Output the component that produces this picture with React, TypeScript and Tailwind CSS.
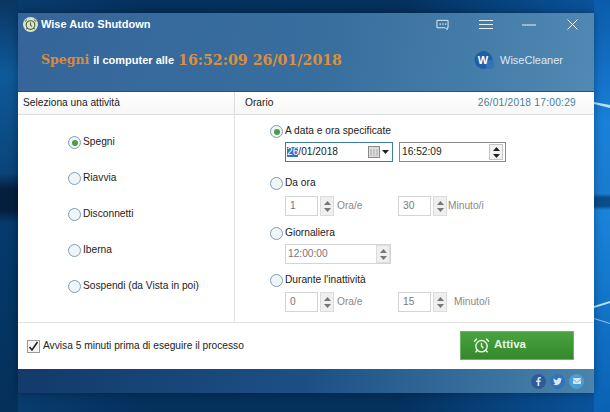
import { AlarmClock } from "lucide-react";
import { FaFacebookF, FaTwitter, FaEnvelope } from "react-icons/fa";

const Radio = ({ checked = false }: { checked?: boolean }) => (
  <span className="flex h-[13px] w-[13px] shrink-0 items-center justify-center rounded-full border border-[#7f9db3] bg-[#eef4f8]">
    {checked && <span className="h-[6px] w-[6px] rounded-full bg-[#4f9a45]" />}
  </span>
);

const Arrow = ({ up }: { up?: boolean }) => (
  <svg width="7" height="4" viewBox="0 0 7 4" className={up ? "" : "rotate-180"}>
    <path d="M3.5 0 7 4H0z" fill="currentColor" />
  </svg>
);

const Stepper = ({ active = false }: { active?: boolean }) => (
  <span
    className={`flex h-full w-[14px] shrink-0 flex-col items-center justify-center gap-[3px] border ${
      active ? "border-[#c4c4c4] bg-[#f2f2f2] text-[#222]" : "border-[#dcdcdc] bg-[#efefef] text-[#777]"
    }`}
  >
    <Arrow up />
    <Arrow />
  </span>
);

const Spin = ({ value }: { value: string }) => (
  <div className="flex h-[20px] items-center gap-[2px]">
    <span className="flex h-full w-[33px] items-center border border-[#d4d4d4] pl-[4px] text-[#777]">{value}</span>
    <Stepper />
  </div>
);

const activities = ["Spegni", "Riavvia", "Disconnetti", "Iberna", "Sospendi (da Vista in poi)"];

export default function App() {
  return (
    <div className="relative h-[412px] w-[610px] overflow-hidden bg-[linear-gradient(90deg,#0a3d70_0%,#04305c_25%,#04305c_65%,#0a56a0_100%)] pl-[18px] pt-[13px] font-['Liberation_Sans',sans-serif] text-[10.2px] leading-none text-[#222]">
      {/* wallpaper */}
      <svg className="absolute left-0 top-0" width="610" height="412" viewBox="0 0 610 412">
        <defs>
          <linearGradient id="wallLeft" x1="0" y1="0" x2="0" y2="1">
            <stop offset="0" stopColor="#0a3560" />
            <stop offset="0.18" stopColor="#0e5a9a" />
            <stop offset="0.42" stopColor="#0a4478" />
            <stop offset="0.46" stopColor="#041f3d" />
            <stop offset="0.51" stopColor="#041f3d" />
            <stop offset="0.54" stopColor="#053a6c" />
            <stop offset="1" stopColor="#04305a" />
          </linearGradient>
          <linearGradient id="wallRight" x1="0" y1="0" x2="0" y2="1">
            <stop offset="0" stopColor="#0a5cab" />
            <stop offset="0.3" stopColor="#1a80d8" />
            <stop offset="0.47" stopColor="#1a7cd0" />
            <stop offset="0.48" stopColor="#0a4d8a" />
            <stop offset="0.5" stopColor="#0a4d8a" />
            <stop offset="0.51" stopColor="#1a84da" />
            <stop offset="1" stopColor="#0a62b4" />
          </linearGradient>
        </defs>
        <rect x="0" y="0" width="18" height="412" fill="url(#wallLeft)" />
        <rect x="594" y="0" width="16" height="412" fill="url(#wallRight)" />
        <path d="M594 102 610 105V108L594 104z" fill="#b8e2fa" />
        <path d="M594 306 610 301V303L594 308z" fill="#b8e2fa" />
        <path d="M594 318 610 323V324L594 319z" fill="#8ccaf2" />
      </svg>

      <div className="relative flex h-[380px] w-[576px] flex-col shadow-[0_0_8px_rgba(0,0,0,0.35)]">
        {/* header */}
        <div className="flex h-[78px] shrink-0 flex-col bg-[linear-gradient(100deg,#35659a_0%,#386f9f_55%,#5089b2_100%)] text-white">
          <div className="flex h-[23px] items-center pl-[5px] pr-[16px]">
            <AlarmClock size={15} className="mr-[3px] rounded-full bg-[#d9e6c8] p-[1px] text-[#4c5f3a]" />
            <span className="text-[11px] font-bold">Wise Auto Shutdown</span>
            <div className="ml-auto flex items-center">
              <svg width="13" height="12" viewBox="0 0 14 12" className="mr-[30px]">
                <path d="M1 1h12v8h-1v2l-2-2H1z" fill="none" stroke="#e8f0f6" strokeWidth="1" />
                <path d="M4 5h1M7 5h1M10 5h1" stroke="#e8f0f6" strokeWidth="2" />
              </svg>
              <svg width="14" height="10" viewBox="0 0 14 10" className="mr-[29px]">
                <path d="M0 .5h14M0 4.5h14M0 8.5h14" stroke="#e8f0f6" />
              </svg>
              <svg width="14" height="2" viewBox="0 0 14 2" className="mr-[31px]">
                <path d="M0 1h14" stroke="#e8f0f6" />
              </svg>
              <svg width="11" height="11" viewBox="0 0 11 11">
                <path d="M.5.5l10 10M10.5.5l-10 10" stroke="#e8f0f6" />
              </svg>
            </div>
          </div>
          <div className="mt-[14px] flex items-center pl-[23px] pr-[31px]">
            <span className="font-['DejaVu_Serif',serif] text-[12.5px] font-bold text-[#d98b3a]">Spegni</span>
            <span className="ml-[4px] text-[11px] font-bold">il computer alle</span>
            <span className="ml-[4px] font-['DejaVu_Serif',serif] text-[14.2px] font-bold text-[#dd8f3c]">
              16:52:09 26/01/2018
            </span>
            <div className="ml-auto flex items-center">
              <span className="relative mr-[5px] flex h-[20px] w-[21px] items-center justify-center">
                <svg width="21" height="20" viewBox="0 0 21 20" className="absolute left-0 top-0">
                  <circle cx="9.5" cy="10" r="9" fill="#1f5fa8" />
                  <circle cx="16" cy="14.5" r="4.5" fill="#2f74b8" />
                </svg>
                <span className="relative pr-[3px] text-[11px] font-bold">W</span>
              </span>
              <span className="text-[11px] text-[#dfe9f0]">WiseCleaner</span>
            </div>
          </div>
        </div>

        {/* body */}
        <div className="flex min-h-0 flex-1 flex-col border-t border-[#2a5272] bg-white">
          <div className="flex h-[23px] shrink-0 border-b border-[#dcdcdc] bg-[linear-gradient(#ffffff,#f7f7f7)]">
            <div className="flex w-[217px] items-center border-r border-[#dcdcdc] pl-[5px]">Seleziona una attività</div>
            <div className="flex flex-1 items-center justify-between pl-[10px] pr-[18px]">
              <span>Orario</span>
              <span className="tracking-[0.25px] text-[#3f8299]">26/01/2018 17:00:29</span>
            </div>
          </div>

          <div className="flex h-[208px] shrink-0 border-b border-[#e2e2e2]">
            <div className="flex w-[217px] flex-col gap-[23px] border-r border-[#e2e2e2] pl-[50px] pt-[21px]">
              {activities.map((a, i) => (
                <label key={a} className="flex h-[13px] items-center gap-[2px]">
                  <Radio checked={i === 0} />
                  {a}
                </label>
              ))}
            </div>

            <div className="flex flex-1 flex-col pl-[35px] pt-[10px]">
              <label className="flex h-[13px] items-center gap-[2px]">
                <Radio checked />
                A data e ora specificate
              </label>
              <div className="ml-[15px] mt-[4px] flex h-[20px] gap-[6px]">
                <div className="flex w-[108px] items-center border border-[#3f7d9c] pl-[1px] pr-[3px]">
                  <span className="bg-[#2f74c0] text-white">26</span>/01/2018
                  <svg width="12" height="12" viewBox="0 0 12 12" className="ml-auto mr-[2px]">
                    <rect x=".5" y=".5" width="11" height="11" fill="#ddd" stroke="#888" />
                    <path d="M3 3v7M6 3v7M9 3v7" stroke="#aaa" />
                  </svg>
                  <Arrow />
                </div>
                <div className="flex w-[107px] items-center justify-between border border-[#888] pl-[2px] pr-[2px]">
                  16:52:09
                  <span className="h-[16px]">
                    <Stepper active />
                  </span>
                </div>
              </div>

              <label className="mt-[15px] flex h-[13px] items-center gap-[2px]">
                <Radio />
                Da ora
              </label>
              <div className="ml-[15px] mt-[6px] flex items-center text-[#888]">
                <Spin value="1" />
                <span className="ml-[3px] w-[61px]">Ora/e</span>
                <Spin value="30" />
                <span className="ml-[1px]">Minuto/i</span>
              </div>

              <label className="mt-[11px] flex h-[13px] items-center gap-[2px]">
                <Radio />
                Giornaliera
              </label>
              <div className="ml-[15px] mt-[4px] flex h-[20px] w-[106px] items-center justify-between border border-[#d4d4d4] pl-[2px] text-[#777]">
                12:00:00
                <Stepper />
              </div>

              <label className="mt-[10px] flex h-[13px] items-center gap-[2px]">
                <Radio />
                Durante l'inattività
              </label>
              <div className="ml-[15px] mt-[5px] flex items-center text-[#888]">
                <Spin value="0" />
                <span className="ml-[3px] w-[61px]">Ora/e</span>
                <Spin value="15" />
                <span className="ml-[7px]">Minuto/i</span>
              </div>
            </div>
          </div>

          <div className="flex flex-1 items-center justify-between pl-[9px] pr-[20px]">
            <label className="flex items-center gap-[3px]">
              <span className="flex h-[13px] w-[13px] items-center justify-center border border-[#999] bg-[#f4f4f4]">
                <svg width="11" height="11" viewBox="0 0 11 11">
                  <path d="M1.5 6 4 9l5.5-8" fill="none" stroke="#222" strokeWidth="1.6" />
                </svg>
              </span>
              Avvisa 5 minuti prima di eseguire il processo
            </label>
            <button className="mb-[2px] flex h-[29px] w-[114px] items-center border border-[#72b264] bg-[linear-gradient(#49a33f,#35882c)] pl-[12px] text-[11.5px] font-bold text-[#e8f5e0]">
              <AlarmClock size={17} className="mr-[4px]" />
              Attiva
            </button>
          </div>
        </div>

        {/* footer */}
        <div className="flex h-[24px] shrink-0 items-center justify-end gap-[4px] bg-[linear-gradient(100deg,#123a6a_0%,#1d4f85_50%,#4a85ad_100%)] pr-[10px] text-[#d8e6f2]">
          <span className="flex h-[15px] w-[15px] items-center justify-center rounded-full bg-[#2f5c96]">
            <FaFacebookF size={9} />
          </span>
          <span className="flex h-[15px] w-[15px] items-center justify-center rounded-full bg-[#2f74b8]">
            <FaTwitter size={9} />
          </span>
          <span className="flex h-[15px] w-[15px] items-center justify-center rounded-full bg-[#4b9ed2]">
            <FaEnvelope size={8} />
          </span>
        </div>
      </div>
    </div>
  );
}
